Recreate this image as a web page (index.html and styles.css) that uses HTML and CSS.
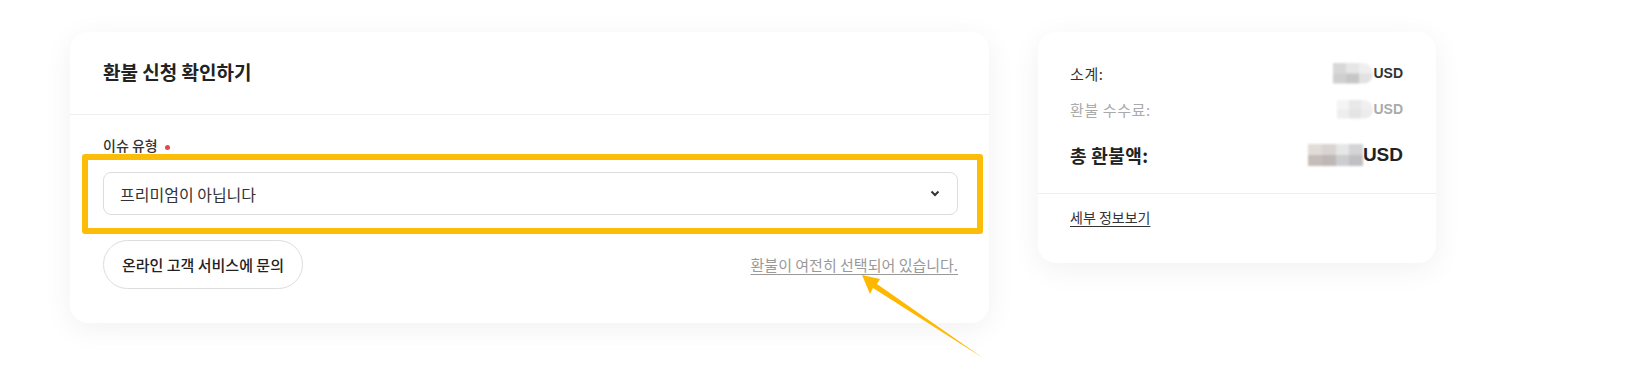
FILE: index.html
```html
<!DOCTYPE html>
<html>
<head>
  <meta charset="utf-8">
  <title>환불 신청 확인하기</title>
  <meta name="viewport" content="width=device-width">
  <link rel="stylesheet" href="styles.css">
</head>
<body>

<div id="page">
  <section class="card refund">
    <header class="refund-head">
      <h1>환불 신청 확인하기</h1>
    </header>

    <div class="refund-body">
      <label class="field-label">이슈 유형 <span class="required"></span></label>

      <div class="field">
        <div class="select">
          <span>프리미엄이 아닙니다</span>
          <svg class="chevron" width="10" height="7" viewBox="0 0 10 7"><polyline points="1.5,1.5 5,5 8.5,1.5" fill="none" stroke="#333" stroke-width="2"/></svg>
        </div>
        <div class="highlight"></div>
      </div>

      <footer class="refund-foot">
        <button type="button" class="pill">온라인 고객 서비스에 문의</button>
        <a href="#" class="still-link">환불이 여전히 선택되어 있습니다.</a>
      </footer>
    </div>
  </section>

  <aside class="card summary">
    <div class="summary-rows">
      <div class="row">
        <span>소계:</span>
        <span class="amount"><span class="mosaic m1"></span>USD</span>
      </div>
      <div class="row muted">
        <span>환불 수수료:</span>
        <span class="amount"><span class="mosaic m2"></span>USD</span>
      </div>
      <div class="row total">
        <span>총 환불액:</span>
        <span class="amount"><span class="mosaic m3"></span>USD</span>
      </div>
    </div>
    <div class="summary-foot">
      <a href="#">세부 정보보기</a>
    </div>
  </aside>

  <svg class="pointer" width="1642" height="389" viewBox="0 0 1642 389">
    <polygon points="862,275 880,279 877,284 983,358 873,288 870,294" fill="#ffb800"/>
  </svg>
</div>

</body>
</html>
```

FILE: styles.css
```css
*,
*:before,
*:after {
  box-sizing: border-box;
}

body,
html {
  margin: 0;
  padding: 0;
  height: 100%;
}

body {
  background: #fff;
  color: #222;
  font-family: 'Noto Sans CJK KR', 'Noto Sans', 'Liberation Sans', sans-serif;
  -webkit-font-smoothing: antialiased;
}

#page {
  position: relative;
  display: flex;
  align-items: flex-start;
  gap: 49px;
  padding: 32px 0 0 70px;
  height: 389px;
}

.card {
  background: #fff;
  border-radius: 18px;
  box-shadow: 0 6px 30px rgba(0, 0, 0, 0.06);
}

.refund {
  width: 919px;
  height: 291px;
}

.refund-head {
  height: 83px;
  padding: 0 33px;
  display: flex;
  align-items: center;
  border-bottom: 1px solid #eee;
}

.refund-head h1 {
  margin: 0 0 4px;
  font-size: 19px;
  font-weight: 700;
  color: #222;
}

.refund-body {
  padding: 20px 31px 0 33px;
}

.field-label {
  display: flex;
  align-items: center;
  gap: 4px;
  height: 20px;
  font-size: 14px;
  font-weight: 500;
  color: #333;
}

.required {
  display: inline-block;
  width: 5px;
  height: 5px;
  margin-left: 3px;
  margin-top: 4px;
  border-radius: 50%;
  background: #e24a4a;
}

.field {
  position: relative;
  margin-top: 17px;
}

.select {
  height: 43px;
  padding: 0 17px 0 16px;
  display: flex;
  align-items: center;
  justify-content: space-between;
  border: 1px solid #ddd;
  border-radius: 8px;
  font-size: 16px;
  color: #333;
}

.highlight {
  position: absolute;
  left: -21px;
  right: -25px;
  top: -18px;
  bottom: -19px;
  border: 6px solid #fbbd08;
  border-radius: 3px;
}

.refund-foot {
  margin-top: 25px;
  display: flex;
  align-items: center;
  justify-content: space-between;
}

.pill {
  height: 49px;
  padding: 0 18px;
  border: 1px solid #ddd;
  border-radius: 25px;
  background: #fff;
  font-family: inherit;
  font-size: 15px;
  font-weight: 500;
  color: #222;
}

.still-link {
  font-size: 15px;
  color: #999;
  text-decoration: underline;
  text-underline-offset: 3px;
}

.summary {
  width: 398px;
  height: 231px;
}

.summary-rows {
  padding: 30px 33px 25px 32px;
  border-bottom: 1px solid #eee;
}

.row {
  display: flex;
  align-items: center;
  justify-content: space-between;
  height: 22px;
  font-size: 15px;
  letter-spacing: 0.04em;
  color: #333;
}

.row + .row {
  margin-top: 14px;
}

.row.muted {
  color: #aaa;
}

.row.total {
  height: 26px;
  margin-top: 22px;
  font-size: 18px;
  font-weight: 700;
  letter-spacing: 0.02em;
  color: #222;
}

.amount {
  display: flex;
  align-items: center;
  font-family: 'Liberation Sans', Arial, sans-serif;
  font-weight: 700;
  font-size: 14px;
  letter-spacing: 0;
}

.row.total .amount {
  font-size: 19px;
}

.mosaic {
  display: inline-block;
  filter: blur(1px);
}

.m1 {
  width: 40px;
  height: 21px;
  background:
    linear-gradient(90deg, #d8d8d8 0 33%, #e6e6e6 33% 66%, #efefef 66%) top / 100% 50% no-repeat,
    linear-gradient(90deg, #cfcfcf 0 33%, #c6c6c6 33% 66%, #e2e2e2 66%) bottom / 100% 50% no-repeat;
  border-radius: 0 10px 10px 0;
}

.m2 {
  width: 36px;
  height: 19px;
  background:
    linear-gradient(90deg, #f4f4f4 0 33%, #e8e8e8 33% 66%, #f0f0f0 66%) top / 100% 50% no-repeat,
    linear-gradient(90deg, #eeeeee 0 33%, #e4e4e4 33% 66%, #ececec 66%) bottom / 100% 50% no-repeat;
  border-radius: 0 10px 10px 0;
}

.m3 {
  width: 55px;
  height: 22px;
  background:
    linear-gradient(90deg, #e2dcd9 0 25%, #d9d3d1 25% 50%, #e6e6e6 50% 75%, #d4d4d6 75%) top / 100% 50% no-repeat,
    linear-gradient(90deg, #c6bdb9 0 25%, #bdb8b6 25% 50%, #cdcdcf 50% 75%, #c0c0c2 75%) bottom / 100% 50% no-repeat;
}

.summary-foot {
  padding: 13px 32px 0;
  font-size: 14px;
}

.summary-foot a {
  color: #333;
  text-decoration: underline;
  text-underline-offset: 3px;
}

.pointer {
  position: absolute;
  top: 0;
  left: 0;
  pointer-events: none;
}
```
